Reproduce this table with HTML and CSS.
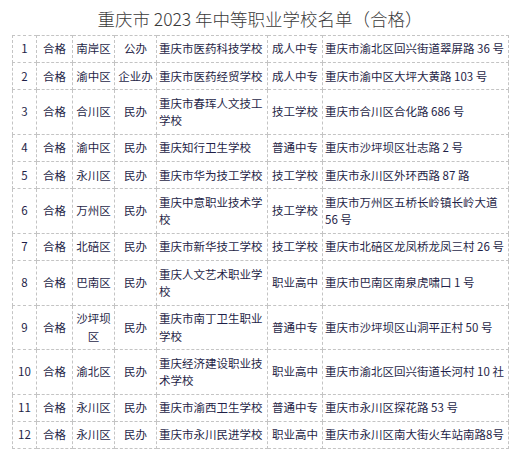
FILE: index.html
```html
<!DOCTYPE html>
<html lang="zh-CN">
<head>
<meta charset="utf-8">
<title>重庆市 2023 年中等职业学校名单（合格）</title>
<link rel="stylesheet" href="styles.css">
</head>
<body>
<div class="page">
  <h1 class="title">重庆市 2023 年中等职业学校名单（合格）</h1>
  <table class="list">
    <colgroup>
      <col class="c-no"><col class="c-st"><col class="c-area"><col class="c-type"><col class="c-name"><col class="c-kind"><col class="c-addr">
    </colgroup>
    <tbody>
      <tr><td class="ctr">1</td><td class="ctr">合格</td><td class="ctr">南岸区</td><td class="ctr">公办</td><td>重庆市医药科技学校</td><td class="ctr">成人中专</td><td class="addr">重庆市渝北区回兴街道翠屏路 36 号</td></tr>
      <tr><td class="ctr">2</td><td class="ctr">合格</td><td class="ctr">渝中区</td><td class="ctr">企业办</td><td>重庆市医药经贸学校</td><td class="ctr">成人中专</td><td class="addr">重庆市渝中区大坪大黄路 103 号</td></tr>
      <tr><td class="ctr">3</td><td class="ctr">合格</td><td class="ctr">合川区</td><td class="ctr">民办</td><td>重庆市春珲人文技工学校</td><td class="ctr">技工学校</td><td class="addr">重庆市合川区合化路 686 号</td></tr>
      <tr><td class="ctr">4</td><td class="ctr">合格</td><td class="ctr">渝中区</td><td class="ctr">民办</td><td>重庆知行卫生学校</td><td class="ctr">普通中专</td><td class="addr">重庆市沙坪坝区壮志路 2 号</td></tr>
      <tr><td class="ctr">5</td><td class="ctr">合格</td><td class="ctr">永川区</td><td class="ctr">民办</td><td>重庆市华为技工学校</td><td class="ctr">技工学校</td><td class="addr">重庆市永川区外环西路 87 路</td></tr>
      <tr><td class="ctr">6</td><td class="ctr">合格</td><td class="ctr">万州区</td><td class="ctr">民办</td><td>重庆中意职业技术学校</td><td class="ctr">技工学校</td><td class="addr">重庆市万州区五桥长岭镇长岭大道 56 号</td></tr>
      <tr><td class="ctr">7</td><td class="ctr">合格</td><td class="ctr">北碚区</td><td class="ctr">民办</td><td>重庆市新华技工学校</td><td class="ctr">技工学校</td><td class="addr">重庆市北碚区龙凤桥龙凤三村 26 号</td></tr>
      <tr><td class="ctr">8</td><td class="ctr">合格</td><td class="ctr">巴南区</td><td class="ctr">民办</td><td>重庆人文艺术职业学校</td><td class="ctr">职业高中</td><td class="addr">重庆市巴南区南泉虎啸口 1 号</td></tr>
      <tr><td class="ctr">9</td><td class="ctr">合格</td><td class="ctr">沙坪坝区</td><td class="ctr">民办</td><td>重庆市南丁卫生职业学校</td><td class="ctr">普通中专</td><td class="addr">重庆市沙坪坝区山洞平正村 50 号</td></tr>
      <tr><td class="ctr">10</td><td class="ctr">合格</td><td class="ctr">渝北区</td><td class="ctr">民办</td><td>重庆经济建设职业技术学校</td><td class="ctr">职业高中</td><td class="addr">重庆市渝北区回兴街道长河村 10 社</td></tr>
      <tr><td class="ctr">11</td><td class="ctr">合格</td><td class="ctr">永川区</td><td class="ctr">民办</td><td>重庆市渝西卫生学校</td><td class="ctr">普通中专</td><td class="addr">重庆市永川区探花路 53 号</td></tr>
      <tr><td class="ctr">12</td><td class="ctr">合格</td><td class="ctr">永川区</td><td class="ctr">民办</td><td>重庆市永川民进学校</td><td class="ctr">职业高中</td><td class="addr">重庆市永川区南大街火车站南路8号</td></tr>
      <tr><td class="ctr">&nbsp;</td><td class="ctr">&nbsp;</td><td class="ctr">&nbsp;</td><td class="ctr">&nbsp;</td><td>&nbsp;</td><td class="ctr">&nbsp;</td><td class="addr">&nbsp;</td></tr>
    </tbody>
  </table>
</div>
</body>
</html>
```

FILE: styles.css
```css
html, body {
  margin: 0;
  padding: 0;
  background: #ffffff;
}

.page {
  padding: 7px 0 0 12px;
  font-family: "Noto Sans CJK SC", "Noto Sans", sans-serif;
}

.title {
  margin: 0 0 4px 0;
  width: 496px;
  text-align: center;
  font-size: 17.5px;
  line-height: 24px;
  font-weight: 300;
  color: #3a3a3a;
}

.list {
  width: 496px;
  table-layout: fixed;
  border-collapse: collapse;
  font-size: 11.5px;
  line-height: 17.4px;
  color: #1f1f48;
}

.list td {
  border: 1px dashed #c4c4c4;
  padding: 4.4px 1px 4.4px 2px;
  vertical-align: middle;
  text-align: left;
}

.list td.ctr {
  text-align: center;
  padding-left: 1px;
  padding-right: 1px;
}

.list td.addr {
  padding-right: 0;
}

.c-no { width: 24px; }
.c-st { width: 36px; }
.c-area { width: 42px; }
.c-type { width: 42px; }
.c-name { width: 111px; }
.c-kind { width: 55px; }
.c-addr { width: 186px; }
```
